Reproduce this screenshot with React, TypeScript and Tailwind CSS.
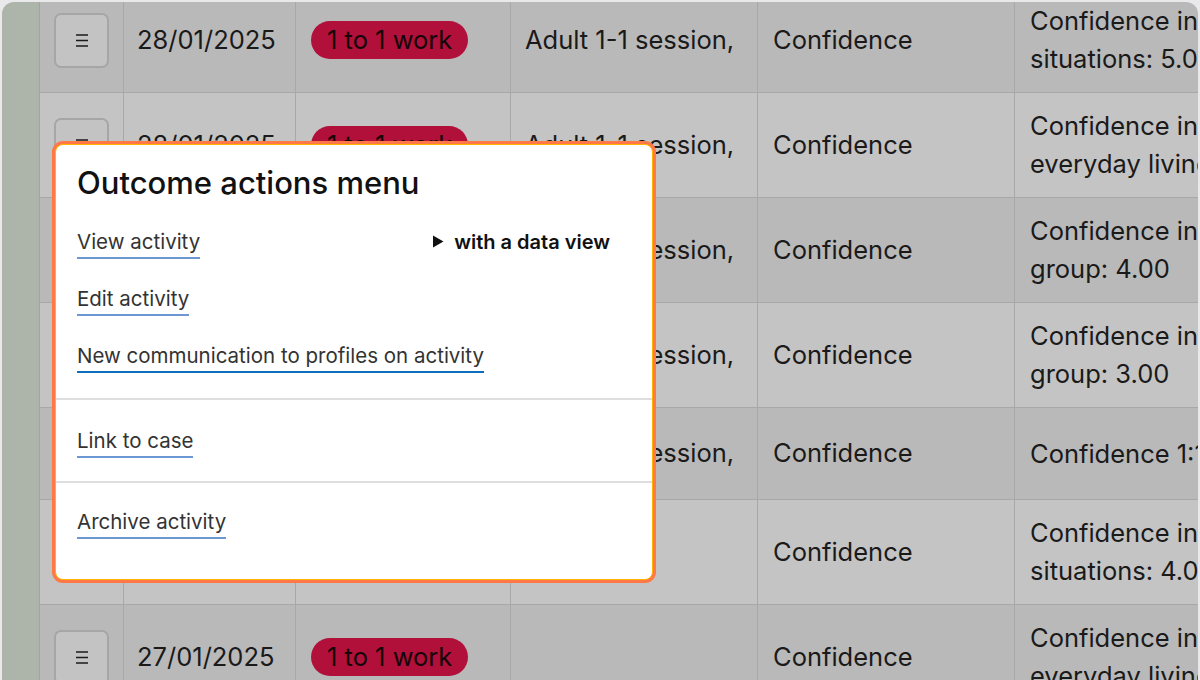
const rows = [
  { date: '28/01/2025', tag: true, desc: 'Adult 1-1 session,', outcome: ['Confidence in', 'situations: 5.00'], dark: true },
  { date: '28/01/2025', tag: true, desc: 'Adult 1-1 session,', outcome: ['Confidence in', 'everyday living'], dark: false },
  { date: '28/01/2025', tag: true, desc: 'Adult 1-1 session,', outcome: ['Confidence in', 'group: 4.00'], dark: true },
  { date: '28/01/2025', tag: true, desc: 'Adult 1-1 session,', outcome: ['Confidence in', 'group: 3.00'], dark: false },
  { date: '28/01/2025', tag: true, desc: 'Adult 1-1 session,', outcome: ['Confidence 1:1'], dark: true },
  { date: '27/01/2025', tag: true, desc: '', outcome: ['Confidence in', 'situations: 4.00'], dark: false },
  { date: '27/01/2025', tag: true, desc: '', outcome: ['Confidence in', 'everyday living'], dark: true },
];

function MenuButton() {
  return (
    <div className="w-[55px] h-[55px] rounded-[7px] border-2 border-[#a6a6a6] bg-[#c3c3c3] flex items-center justify-center">
      <svg width="12" height="13" viewBox="0 0 12 13">
        <path d="M0 1h12M0 6.5h12M0 12h12" stroke="#1b1b1b" strokeWidth="1.5" />
      </svg>
    </div>
  );
}

function MenuLink({ label, strong }: { label: string; strong?: boolean }) {
  return (
    <span
      className={`inline-block leading-[26px] pt-[4px] pb-[2px] border-b-2 ${strong ? 'border-[#0d6dbd]' : 'border-[#6b98d2]'}`}
    >
      {label}
    </span>
  );
}

export default function App() {
  return (
    <div className="w-[1200px] h-[680px] bg-[#e9e9eb] pt-[2px] px-[2px] overflow-hidden font-['Inter',sans-serif]">
      <div className="relative h-full flex rounded-t-[12px] overflow-hidden">
        <div className="w-[38px] shrink-0 bg-[#adb5aa] border-r border-[#a3a3a3]" />

        <div className="flex-1 -mt-[14px] text-[25.5px] text-[#1a1a1a]">
          {rows.map((r, i) => (
            <div
              key={i}
              className={`flex border-b border-[#a8a8a8] ${r.outcome.length > 1 ? 'h-[105px]' : 'h-[92px]'} ${r.dark ? 'bg-[#b9b9b9]' : 'bg-[#c4c4c4]'}`}
            >
              <div className="w-[84px] shrink-0 border-r border-[#a8a8a8] flex items-center pl-[14px]">
                <MenuButton />
              </div>
              <div className="w-[172px] shrink-0 border-r border-[#a8a8a8] flex items-center pl-[13px]">
                {r.date}
              </div>
              <div className="w-[215px] shrink-0 border-r border-[#a8a8a8] flex items-center pl-[15px]">
                {r.tag && (
                  <span className="h-[38px] px-[16px] rounded-full bg-[#b0103a] text-[#150508] flex items-center">
                    1 to 1 work
                  </span>
                )}
              </div>
              <div className="w-[247px] shrink-0 border-r border-[#a8a8a8] flex items-center pl-[14px] whitespace-nowrap overflow-hidden">
                {r.desc}
              </div>
              <div className="w-[257px] shrink-0 border-r border-[#a8a8a8] flex items-center pl-[15px]">
                Confidence
              </div>
              <div className="flex-1 flex flex-col justify-center pl-[15px] leading-[38px] whitespace-nowrap overflow-hidden">
                {r.outcome.map((l) => (
                  <span key={l}>{l}</span>
                ))}
              </div>
            </div>
          ))}
        </div>

        <div className="absolute left-[50px] top-[139px] w-[604px] h-[442px] rounded-[11px] bg-[#ff7845] p-[3px]">
          <div className="h-full rounded-[8px] border border-[#ffb400] bg-white flex flex-col text-[20.5px] text-[#333]">
            <div className="pt-[20px] pb-[14px] px-[21px]">
              <h2 className="text-[31px] leading-[36px] font-medium text-[#111] mb-[12px]">
                Outcome actions menu
              </h2>
              <div className="h-[57px] flex items-center justify-between pr-[21px]">
                <MenuLink label="View activity" />
                <span className="flex items-center gap-[10px] text-[20px] font-semibold text-[#111]">
                  <svg width="12" height="13" viewBox="0 0 12 13">
                    <path d="M1 0.5L11.5 6.5L1 12.5Z" fill="#111" />
                  </svg>
                  with a data view
                </span>
              </div>
              <div className="h-[57px] flex items-center">
                <MenuLink label="Edit activity" />
              </div>
              <div className="h-[57px] flex items-center">
                <MenuLink label="New communication to profiles on activity" strong />
              </div>
            </div>
            <div className="border-t-2 border-[#dedede] pt-[12px] pb-[12px] px-[21px]">
              <div className="h-[57px] flex items-center">
                <MenuLink label="Link to case" />
              </div>
            </div>
            <div className="border-t-2 border-[#dedede] pt-[10px] px-[21px]">
              <div className="h-[57px] flex items-center">
                <MenuLink label="Archive activity" />
              </div>
            </div>
          </div>
        </div>
      </div>
    </div>
  );
}
